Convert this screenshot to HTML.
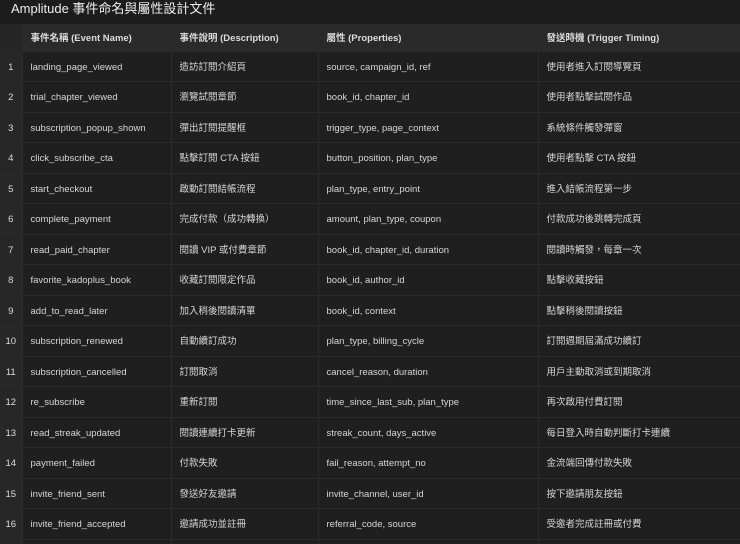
<!DOCTYPE html>
<html><head><meta charset="utf-8"><style>
html,body{margin:0;padding:0;background:#1e1e1e;width:740px;height:544px;overflow:hidden}
body{font-family:"Liberation Sans","Noto Sans CJK TC",sans-serif;color:#d6d6d6;font-size:9.5px}
#wrap{position:relative;width:740px;height:544px;overflow:hidden}
.title{position:absolute;top:0;height:26px;line-height:17px;font-size:13px;color:#eee;background:#1c1c1c;width:740px;left:0;padding-left:11px;box-sizing:border-box}
table{position:absolute;top:24px;left:0;border-collapse:collapse;table-layout:fixed;width:760px}
tr{height:30.5px}
thead tr{height:27px}
td,th{border-bottom:1px solid #2a2a2a;border-right:1px solid #2c2c2c;line-height:12px;padding:3px 0 0 8px;text-align:left;white-space:nowrap;overflow:hidden;font-weight:normal;vertical-align:middle}
th{background:#2a2a2a;font-weight:bold;color:#ddd}
td.i,th.i{background:#262626;padding:3px 0 0 0;text-align:center;color:#ddd}
tbody td{background:#1f1f1f}
tbody td.i{background:#272727}
</style></head><body><div id="wrap">
<div class="title">Amplitude 事件命名與屬性設計文件</div>
<table>
<colgroup><col style="width:22px"><col style="width:149px"><col style="width:147px"><col style="width:220px"><col style="width:222px"></colgroup>
<thead><tr><th class="i"></th><th>事件名稱 (Event Name)</th><th>事件說明 (Description)</th><th>屬性 (Properties)</th><th>發送時機 (Trigger Timing)</th></tr></thead>
<tbody>
<tr><td class="i">1</td><td>landing_page_viewed</td><td>造訪訂閱介紹頁</td><td>source, campaign_id, ref</td><td>使用者進入訂閱導覽頁</td></tr>
<tr><td class="i">2</td><td>trial_chapter_viewed</td><td>瀏覽試閱章節</td><td>book_id, chapter_id</td><td>使用者點擊試閱作品</td></tr>
<tr><td class="i">3</td><td>subscription_popup_shown</td><td>彈出訂閱提醒框</td><td>trigger_type, page_context</td><td>系統條件觸發彈窗</td></tr>
<tr><td class="i">4</td><td>click_subscribe_cta</td><td>點擊訂閱 CTA 按鈕</td><td>button_position, plan_type</td><td>使用者點擊 CTA 按鈕</td></tr>
<tr><td class="i">5</td><td>start_checkout</td><td>啟動訂閱結帳流程</td><td>plan_type, entry_point</td><td>進入結帳流程第一步</td></tr>
<tr><td class="i">6</td><td>complete_payment</td><td>完成付款（成功轉換）</td><td>amount, plan_type, coupon</td><td>付款成功後跳轉完成頁</td></tr>
<tr><td class="i">7</td><td>read_paid_chapter</td><td>閱讀 VIP 或付費章節</td><td>book_id, chapter_id, duration</td><td>閱讀時觸發，每章一次</td></tr>
<tr><td class="i">8</td><td>favorite_kadoplus_book</td><td>收藏訂閱限定作品</td><td>book_id, author_id</td><td>點擊收藏按鈕</td></tr>
<tr><td class="i">9</td><td>add_to_read_later</td><td>加入稍後閱讀清單</td><td>book_id, context</td><td>點擊稍後閱讀按鈕</td></tr>
<tr><td class="i">10</td><td>subscription_renewed</td><td>自動續訂成功</td><td>plan_type, billing_cycle</td><td>訂閱週期屆滿成功續訂</td></tr>
<tr><td class="i">11</td><td>subscription_cancelled</td><td>訂閱取消</td><td>cancel_reason, duration</td><td>用戶主動取消或到期取消</td></tr>
<tr><td class="i">12</td><td>re_subscribe</td><td>重新訂閱</td><td>time_since_last_sub, plan_type</td><td>再次啟用付費訂閱</td></tr>
<tr><td class="i">13</td><td>read_streak_updated</td><td>閱讀連續打卡更新</td><td>streak_count, days_active</td><td>每日登入時自動判斷打卡連續</td></tr>
<tr><td class="i">14</td><td>payment_failed</td><td>付款失敗</td><td>fail_reason, attempt_no</td><td>金流端回傳付款失敗</td></tr>
<tr><td class="i">15</td><td>invite_friend_sent</td><td>發送好友邀請</td><td>invite_channel, user_id</td><td>按下邀請朋友按鈕</td></tr>
<tr><td class="i">16</td><td>invite_friend_accepted</td><td>邀請成功並註冊</td><td>referral_code, source</td><td>受邀者完成註冊或付費</td></tr>
<tr><td class="i"></td><td></td><td></td><td></td><td></td></tr>
</tbody></table>
</div></body></html>
